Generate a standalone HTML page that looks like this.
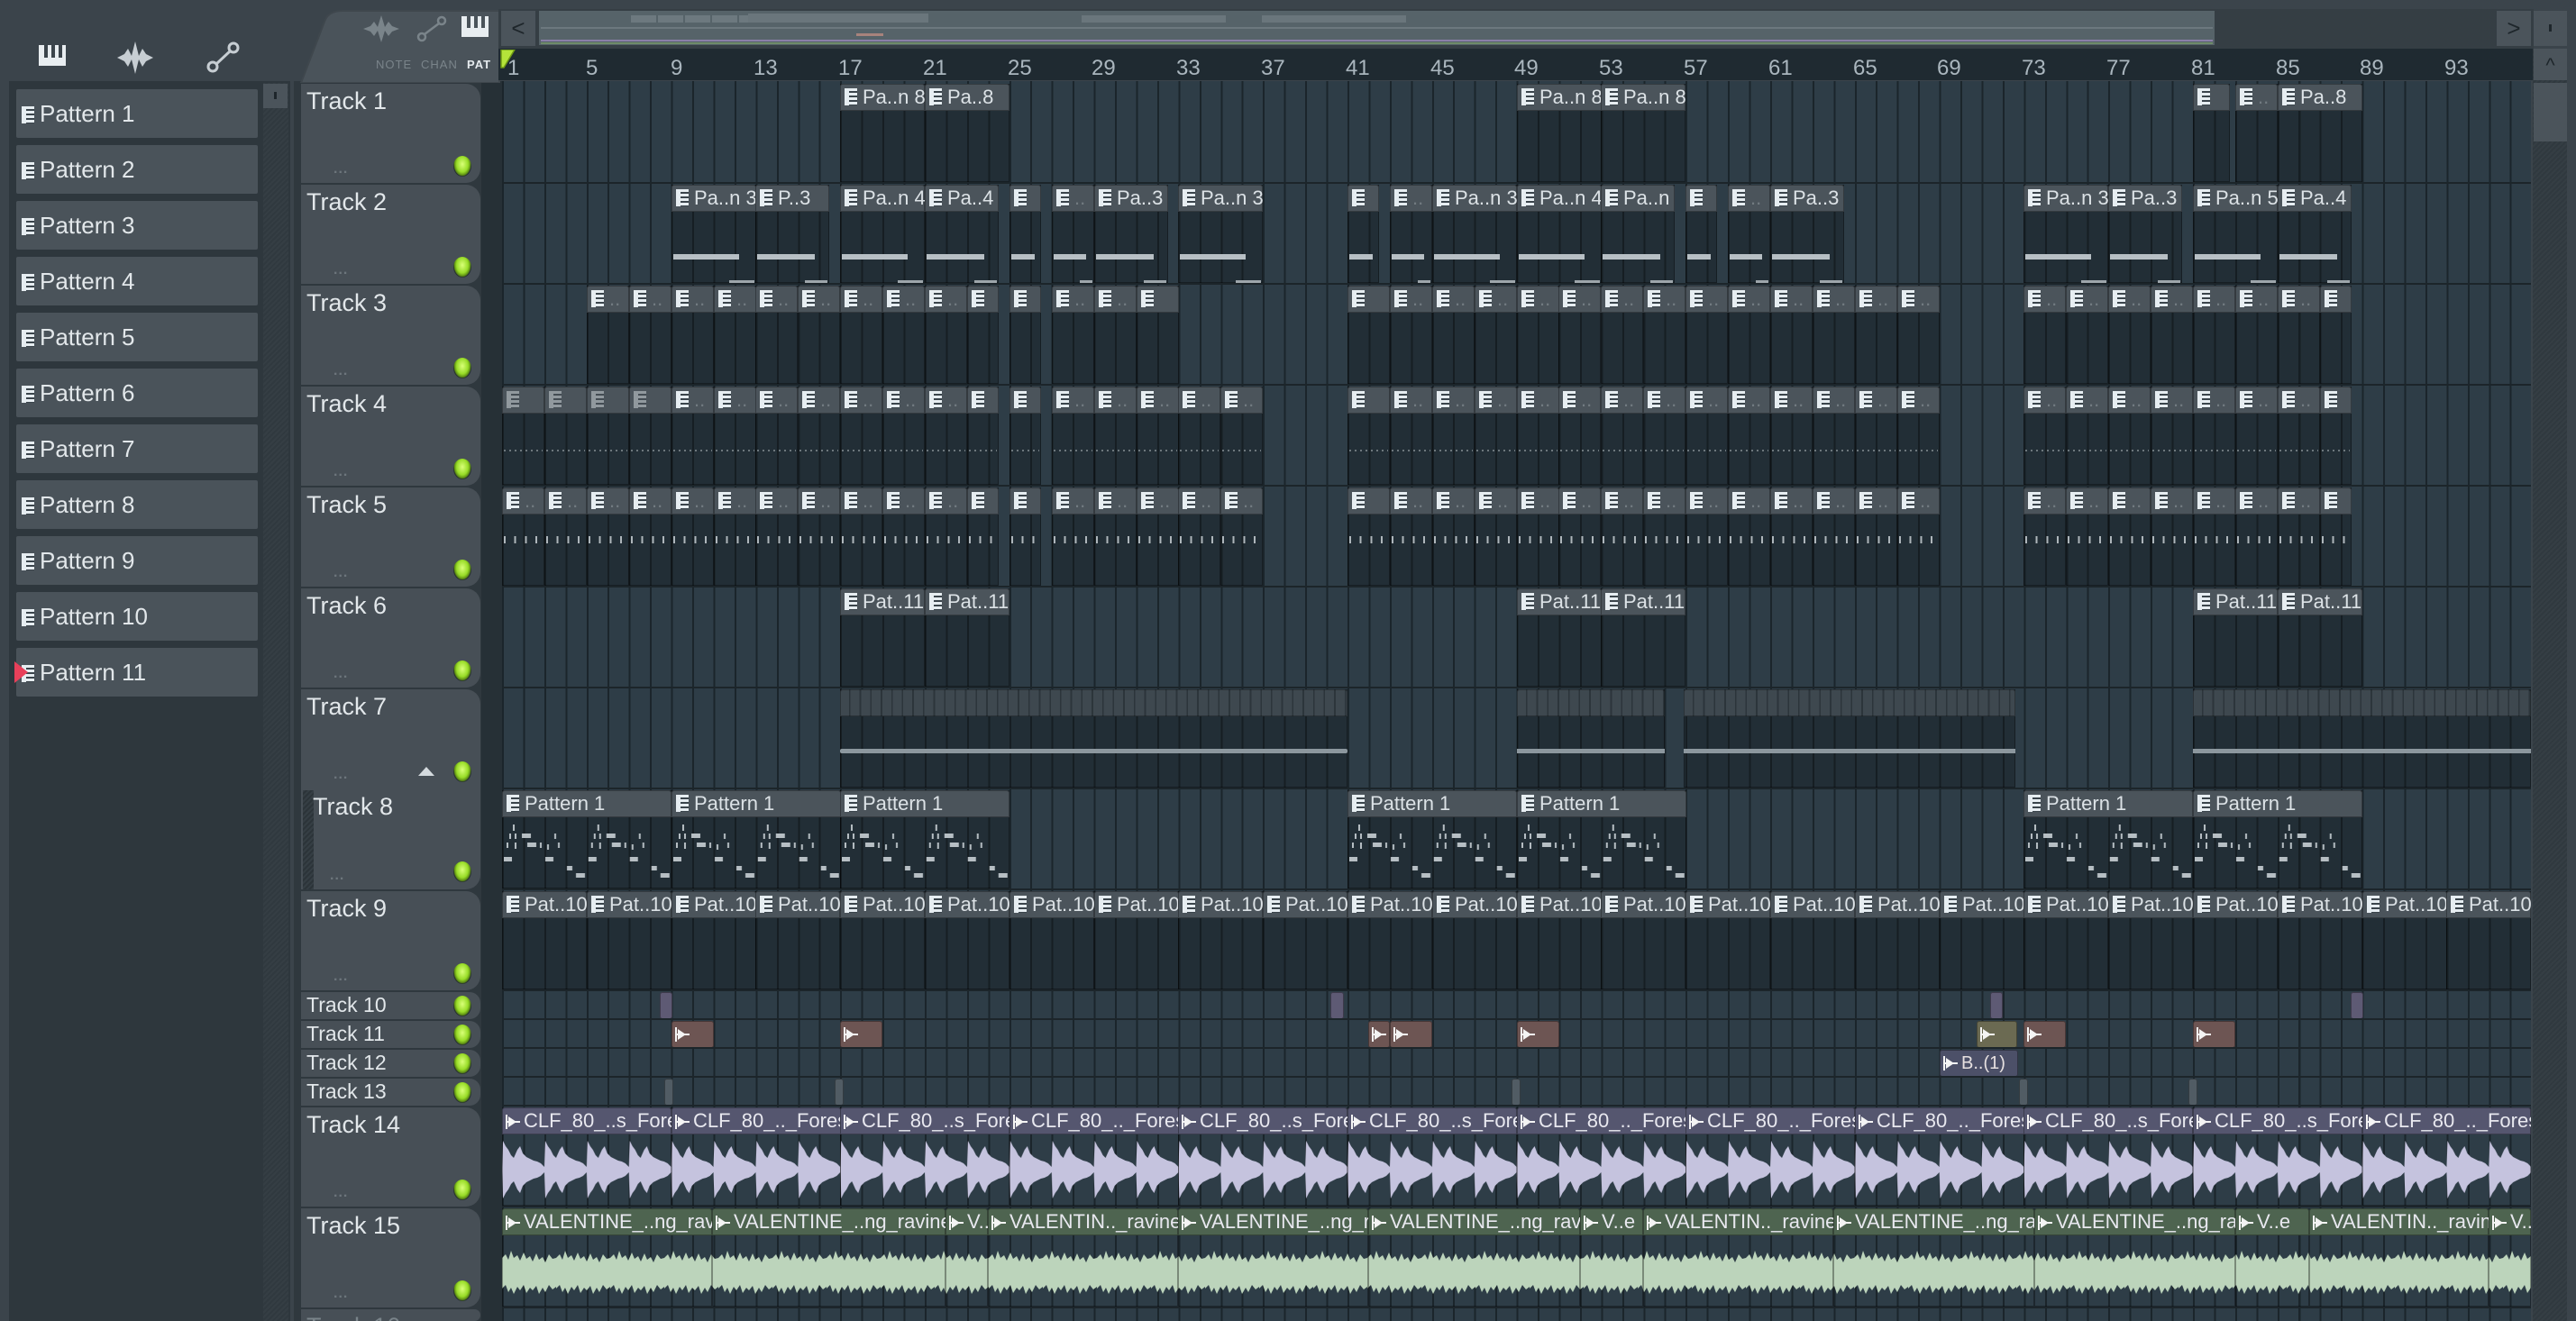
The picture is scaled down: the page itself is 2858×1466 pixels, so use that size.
<!DOCTYPE html>
<html style="width:2858px;height:1466px;overflow:hidden"><head><meta charset="utf-8">
<style>
*{box-sizing:border-box}
html,body{margin:0;width:2858px;height:1466px;overflow:hidden}
body{background:#3b444b;position:relative;font-family:"Liberation Sans","DejaVu Sans",sans-serif}
.a{position:absolute}
.pi{display:inline-block;width:14px;height:19px;vertical-align:-2px;margin-right:6px;background:linear-gradient(90deg,#e6edf1 0 5px,transparent 5px),repeating-linear-gradient(180deg,#e6edf1 0 3px,#3a444b 3px 5px);}
.pit{position:absolute;left:18px;width:268px;height:54px;background:#4a535a;border-radius:2px;color:#e2e7ea;font-size:26px;line-height:54px;padding-left:6px;white-space:nowrap}
.th{position:absolute;left:334px;width:199px;height:110px;background:#474f56;border-radius:0 16px 16px 0;color:#e2e7ea;font-size:27px;padding:4px 0 0 6px;white-space:nowrap}
.th.s{height:30px;font-size:23px;padding-top:1px;border-radius:0 12px 12px 0}
.led{position:absolute;left:169px;width:20px;height:23px;border-radius:50%;background:radial-gradient(ellipse at 50% 40%,#d9ff78 0,#98dc27 45%,#5f8f14 62%,#222b30 70%,#3d464c 80%)}
.dots{position:absolute;left:36px;bottom:6px;color:#6d767c;font-size:16px;letter-spacing:1px;font-weight:bold}
.row{position:absolute;left:557px;width:2251px;height:112px}
.row:after{content:"";position:absolute;left:0;right:0;bottom:0;height:2px;background:#1c252a}
.c{position:absolute;top:1px;height:109px;background:rgba(12,18,22,.33);box-shadow:inset 0 0 0 1px rgba(0,0,0,.35)}
.h{height:30px;background:#4b545b;color:#dce2e6;font-size:22px;line-height:30px;padding-left:5px;white-space:nowrap;overflow:hidden;border-radius:3px 3px 0 0;box-shadow:inset 0 0 0 1px rgba(0,0,0,.3)}
.h i{font-style:normal;color:#727b81}
.d .h .pi{opacity:.45}
.n{position:absolute;top:77px;height:6px;left:2px;right:20%;background:#b7bfc4}
.n2{position:absolute;top:106px;height:5px;right:2px;width:30%;background:#9ea6ab}
.dl{position:absolute;left:2px;right:2px;top:70px;height:2px;background:repeating-linear-gradient(90deg,#6d777d 0 2px,transparent 2px 6px)}
.tk{position:absolute;left:2px;right:2px;top:54px;height:8px;background:repeating-linear-gradient(90deg,#aeb6bb 0 2px,transparent 2px 11.7px)}
.sm{position:absolute;top:1px;height:30px;border-radius:3px;box-shadow:inset 0 0 0 1px rgba(0,0,0,.35);color:#e6e0e0;font-size:20px;line-height:30px;padding-left:4px;white-space:nowrap;overflow:hidden}
.au{display:inline-block;width:16px;height:16px;vertical-align:-2px;margin-right:4px;position:relative;background:linear-gradient(#f4f4f4,#f4f4f4) 0 0/2px 16px no-repeat,linear-gradient(#f4f4f4,#f4f4f4) 0 7px/16px 2px no-repeat}
.au:after{content:"";position:absolute;left:3px;top:2px;border-left:9px solid #f4f4f4;border-top:6px solid transparent;border-bottom:6px solid transparent}
.rl{position:absolute;top:62px;color:#aab6be;font-size:24px}
.wh{height:30px;color:#e8e8ef;font-size:22px;line-height:30px;padding-left:4px;white-space:nowrap;overflow:hidden;border-radius:3px 3px 0 0;box-shadow:inset 0 0 0 1px rgba(0,0,0,.3)}
.nt{position:absolute;left:2px;top:36px}
</style></head><body>
<svg width="0" height="0" style="position:absolute"><defs><pattern id="p8" width="93.8" height="70" patternUnits="userSpaceOnUse"><g fill="#b7bfc4"><rect x="10" y="2" width="2" height="7"/><rect x="6" y="12" width="2" height="6"/><rect x="12" y="12" width="2" height="6"/><rect x="20" y="12" width="10" height="5"/><rect x="3" y="22" width="2" height="6"/><rect x="12" y="22" width="2" height="7"/><rect x="26" y="22" width="10" height="5"/><rect x="40" y="22" width="2" height="6"/><rect x="48" y="24" width="2" height="6"/><rect x="0" y="38" width="9" height="5"/><rect x="46" y="38" width="9" height="5"/><rect x="70" y="48" width="6" height="5"/><rect x="80" y="56" width="10" height="5"/><rect x="56" y="12" width="2" height="6"/><rect x="60" y="22" width="2" height="6"/></g></pattern></defs></svg>

<!-- left panel top icons -->
<div class="a" style="left:43px;top:50px;width:30px;height:23px;background:#e8edf0"></div>
<div class="a" style="left:49px;top:50px;width:4px;height:14px;background:#3b444b"></div>
<div class="a" style="left:57px;top:50px;width:4px;height:14px;background:#3b444b"></div>
<div class="a" style="left:65px;top:50px;width:4px;height:14px;background:#3b444b"></div>
<svg class="a" style="left:130px;top:44px" width="44" height="40"><path d="M0 20 L8 16 L12 10 L16 18 L20 2 L24 18 L28 10 L32 16 L40 20 L32 24 L28 30 L24 22 L20 38 L16 22 L12 30 L8 24 Z" fill="#c7ced3"/></svg>
<svg class="a" style="left:228px;top:44px" width="40" height="40"><circle cx="8" cy="30" r="5" fill="none" stroke="#c7ced3" stroke-width="3"/><circle cx="31" cy="9" r="5" fill="none" stroke="#c7ced3" stroke-width="3"/><line x1="12" y1="27" x2="27" y2="13" stroke="#c7ced3" stroke-width="3"/></svg>

<!-- pattern list -->
<div class="a" style="left:10px;top:90px;width:312px;height:1376px;background:#2e373d"></div>
<div class="a" style="left:292px;top:92px;width:28px;height:1374px;background:repeating-linear-gradient(135deg,#353e44 0 2px,#30393f 2px 4px)"></div>
<div class="a" style="left:292px;top:93px;width:27px;height:27px;background:#4b545b"></div>
<div class="a" style="left:304px;top:102px;width:3px;height:8px;background:#1e262b"></div>
<div class="pit" style="top:99px"><span class="pi"></span>Pattern 1</div>
<div class="pit" style="top:161px"><span class="pi"></span>Pattern 2</div>
<div class="pit" style="top:223px"><span class="pi"></span>Pattern 3</div>
<div class="pit" style="top:285px"><span class="pi"></span>Pattern 4</div>
<div class="pit" style="top:347px"><span class="pi"></span>Pattern 5</div>
<div class="pit" style="top:409px"><span class="pi"></span>Pattern 6</div>
<div class="pit" style="top:471px"><span class="pi"></span>Pattern 7</div>
<div class="pit" style="top:533px"><span class="pi"></span>Pattern 8</div>
<div class="pit" style="top:595px"><span class="pi"></span>Pattern 9</div>
<div class="pit" style="top:657px"><span class="pi"></span>Pattern 10</div>
<div class="pit" style="top:719px"><span class="pi"></span>Pattern 11</div>
<div class="a" style="left:16px;top:734px;border-left:15px solid #e8405a;border-top:12px solid transparent;border-bottom:12px solid transparent"></div>

<!-- header column background -->
<div class="a" style="left:326px;top:90px;width:231px;height:1376px;background:#2f383e"></div>
<div class="a" style="left:534px;top:90px;width:23px;height:1376px;background:#263036"></div>

<!-- tab -->
<svg class="a" style="left:330px;top:10px" width="226" height="82"><path d="M4 82 L30 14 Q34 2 50 2 L224 2 L224 82 Z" fill="#4a535a" stroke="#3f474d" stroke-width="2"/></svg>
<svg class="a" style="left:403px;top:16px" width="42" height="32"><path d="M0 16 L8 13 L12 8 L16 14 L20 1 L24 14 L28 8 L32 13 L40 16 L32 19 L28 24 L24 18 L20 31 L16 18 L12 24 L8 19 Z" fill="#7a848a"/></svg>
<svg class="a" style="left:462px;top:16px" width="34" height="32"><circle cx="6" cy="25" r="4" fill="none" stroke="#7a848a" stroke-width="2.5"/><circle cx="28" cy="7" r="4" fill="none" stroke="#7a848a" stroke-width="2.5"/><line x1="9" y1="22" x2="25" y2="10" stroke="#7a848a" stroke-width="2.5"/></svg>
<div class="a" style="left:512px;top:18px;width:30px;height:23px;background:#e8edf0"></div>
<div class="a" style="left:518px;top:18px;width:4px;height:13px;background:#4a535a"></div>
<div class="a" style="left:526px;top:18px;width:4px;height:13px;background:#4a535a"></div>
<div class="a" style="left:534px;top:18px;width:4px;height:13px;background:#4a535a"></div>
<div class="a" style="left:417px;top:64px;font-size:13px;color:#7a848a;letter-spacing:1px">NOTE</div>
<div class="a" style="left:467px;top:64px;font-size:13px;color:#7a848a;letter-spacing:1px">CHAN</div>
<div class="a" style="left:518px;top:64px;font-size:13px;color:#e6ebee;font-weight:bold;letter-spacing:1px">PAT</div>

<!-- overview bar -->
<div class="a" style="left:553px;top:10px;width:2258px;height:44px;background:#353e44"></div>
<div class="a" style="left:556px;top:12px;width:38px;height:39px;background:#4b545b;color:#1e262b;font-size:26px;text-align:center;line-height:38px">&lt;</div>
<div class="a" style="left:598px;top:12px;width:1859px;height:38px;background:#566369"></div>
<div class="a" style="left:600px;top:30px;width:1855px;height:2px;background:#6c787e"></div>
<div class="a" style="left:600px;top:44px;width:1855px;height:2px;background:#8a7fa8"></div>
<div class="a" style="left:600px;top:47px;width:1855px;height:2px;background:#6f8c6a"></div>
<div class="a" style="left:700px;top:17px;width:220px;height:8px;background:repeating-linear-gradient(90deg,#6d797f 0 28px,transparent 28px 30px)"></div>
<div class="a" style="left:830px;top:15px;width:200px;height:10px;background:#6a767c"></div>
<div class="a" style="left:950px;top:37px;width:30px;height:3px;background:#a8837c"></div>
<div class="a" style="left:1200px;top:17px;width:160px;height:8px;background:#6a767c"></div>
<div class="a" style="left:1400px;top:17px;width:160px;height:8px;background:#6a767c"></div>
<div class="a" style="left:2770px;top:12px;width:38px;height:39px;background:#4b545b;color:#1e262b;font-size:26px;text-align:center;line-height:38px">&gt;</div>
<div class="a" style="left:2811px;top:12px;width:37px;height:39px;background:#4b545b"></div>
<div class="a" style="left:2828px;top:27px;width:3px;height:8px;background:#1e262b"></div>

<!-- right scrollbar -->
<div class="a" style="left:2810px;top:54px;width:38px;height:1412px;background:repeating-linear-gradient(135deg,#353e44 0 2px,#30393f 2px 4px)"></div>
<div class="a" style="left:2811px;top:54px;width:37px;height:35px;background:#4b545b;color:#1e262b;font-size:22px;text-align:center;line-height:38px">^</div>
<div class="a" style="left:2811px;top:92px;width:37px;height:65px;background:#4b545b"></div>

<!-- ruler -->
<div class="a" style="left:553px;top:54px;width:2257px;height:35px;background:#1f2a31"></div>
<div class="rl" style="left:563px">1</div>
<div class="rl" style="left:650px">5</div>
<div class="rl" style="left:744px">9</div>
<div class="rl" style="left:836px">13</div>
<div class="rl" style="left:930px">17</div>
<div class="rl" style="left:1024px">21</div>
<div class="rl" style="left:1118px">25</div>
<div class="rl" style="left:1211px">29</div>
<div class="rl" style="left:1305px">33</div>
<div class="rl" style="left:1399px">37</div>
<div class="rl" style="left:1493px">41</div>
<div class="rl" style="left:1587px">45</div>
<div class="rl" style="left:1680px">49</div>
<div class="rl" style="left:1774px">53</div>
<div class="rl" style="left:1868px">57</div>
<div class="rl" style="left:1962px">61</div>
<div class="rl" style="left:2056px">65</div>
<div class="rl" style="left:2149px">69</div>
<div class="rl" style="left:2243px">73</div>
<div class="rl" style="left:2337px">77</div>
<div class="rl" style="left:2431px">81</div>
<div class="rl" style="left:2525px">85</div>
<div class="rl" style="left:2618px">89</div>
<div class="rl" style="left:2712px">93</div>
<svg class="a" style="left:555px;top:55px" width="20" height="22"><path d="M1 0 L16 0 L4 20 L1 20 Z" fill="#b5e43a" stroke="#6f9a14" stroke-width="1.5"/></svg>

<!-- grid -->
<div class="a" style="left:557px;top:90px;width:2251px;height:1376px;background:repeating-linear-gradient(90deg,#1b252b 0 2px,transparent 2px 23.45px),#2e3d47"></div>

<!-- track headers -->
<div class="th" style="top:93px">Track 1<div class="dots">...</div><div class="led" style="top:80px"></div></div>
<div class="th" style="top:205px">Track 2<div class="dots">...</div><div class="led" style="top:80px"></div></div>
<div class="th" style="top:317px">Track 3<div class="dots">...</div><div class="led" style="top:80px"></div></div>
<div class="th" style="top:429px">Track 4<div class="dots">...</div><div class="led" style="top:80px"></div></div>
<div class="th" style="top:541px">Track 5<div class="dots">...</div><div class="led" style="top:80px"></div></div>
<div class="th" style="top:653px">Track 6<div class="dots">...</div><div class="led" style="top:80px"></div></div>
<div class="th" style="top:765px;height:222px">Track 7<div class="dots" style="bottom:118px">...</div><div class="led" style="top:80px"></div>
<div class="a" style="left:130px;top:86px;border-bottom:10px solid #d4dade;border-left:9px solid transparent;border-right:9px solid transparent"></div></div>
<div class="a" style="left:336px;top:877px;width:12px;height:110px;background:repeating-linear-gradient(135deg,#353e44 0 2px,#2c3439 2px 4px)"></div>
<div class="a" style="left:347px;top:880px;font-size:27px;color:#e2e7ea">Track 8</div>
<div class="a" style="left:366px;top:963px;color:#6d767c;font-size:16px;font-weight:bold;letter-spacing:1px">...</div>
<div class="led a" style="left:503px;top:956px"></div>
<div class="th" style="top:989px">Track 9<div class="dots">...</div><div class="led" style="top:80px"></div></div>
<div class="th s" style="top:1101px">Track 10<div class="led" style="top:4px"></div></div>
<div class="th s" style="top:1133px">Track 11<div class="led" style="top:4px"></div></div>
<div class="th s" style="top:1165px">Track 12<div class="led" style="top:4px"></div></div>
<div class="th s" style="top:1197px">Track 13<div class="led" style="top:4px"></div></div>
<div class="th" style="top:1229px">Track 14<div class="dots">...</div><div class="led" style="top:80px"></div></div>
<div class="th" style="top:1341px">Track 15<div class="dots">...</div><div class="led" style="top:80px"></div></div>
<div class="th" style="top:1453px;height:13px;color:#7a848a;overflow:hidden">Track 16</div>

<!-- Track 1 -->
<div class="row" style="top:92px">
<div class="c" style="left:375px;width:94px"><div class="h"><span class="pi"></span>Pa..n 8</div></div>
<div class="c" style="left:469px;width:94px"><div class="h"><span class="pi"></span>Pa..8</div></div>
<div class="c" style="left:1126px;width:94px"><div class="h"><span class="pi"></span>Pa..n 8</div></div>
<div class="c" style="left:1219px;width:94px"><div class="h"><span class="pi"></span>Pa..n 8</div></div>
<div class="c" style="left:1876px;width:41px"><div class="h"><span class="pi"></span></div></div>
<div class="c" style="left:1923px;width:47px"><div class="h"><span class="pi"></span><i>..</i></div></div>
<div class="c" style="left:1970px;width:94px"><div class="h"><span class="pi"></span>Pa..8</div></div>
</div>

<!-- Track 2 -->
<div class="row" style="top:204px">
<div class="c" style="left:188px;width:94px"><div class="h"><span class="pi"></span>Pa..n 3</div><div class="n"></div><div class="n2"></div></div>
<div class="c" style="left:281px;width:82px"><div class="h"><span class="pi"></span>P..3</div><div class="n"></div><div class="n2"></div></div>
<div class="c" style="left:375px;width:94px"><div class="h"><span class="pi"></span>Pa..n 4</div><div class="n"></div><div class="n2"></div></div>
<div class="c" style="left:469px;width:82px"><div class="h"><span class="pi"></span>Pa..4</div><div class="n"></div><div class="n2"></div></div>
<div class="c" style="left:563px;width:35px"><div class="h"><span class="pi"></span></div><div class="n"></div></div>
<div class="c" style="left:610px;width:47px"><div class="h"><span class="pi"></span><i>..</i></div><div class="n"></div><div class="n2"></div></div>
<div class="c" style="left:657px;width:82px"><div class="h"><span class="pi"></span>Pa..3</div><div class="n"></div><div class="n2"></div></div>
<div class="c" style="left:750px;width:94px"><div class="h"><span class="pi"></span>Pa..n 3</div><div class="n"></div><div class="n2"></div></div>
<div class="c" style="left:938px;width:35px"><div class="h"><span class="pi"></span></div><div class="n"></div></div>
<div class="c" style="left:985px;width:47px"><div class="h"><span class="pi"></span><i>..</i></div><div class="n"></div><div class="n2"></div></div>
<div class="c" style="left:1032px;width:94px"><div class="h"><span class="pi"></span>Pa..n 3</div><div class="n"></div><div class="n2"></div></div>
<div class="c" style="left:1126px;width:94px"><div class="h"><span class="pi"></span>Pa..n 4</div><div class="n"></div><div class="n2"></div></div>
<div class="c" style="left:1219px;width:82px"><div class="h"><span class="pi"></span>Pa..n 4</div><div class="n"></div><div class="n2"></div></div>
<div class="c" style="left:1313px;width:35px"><div class="h"><span class="pi"></span></div><div class="n"></div></div>
<div class="c" style="left:1360px;width:47px"><div class="h"><span class="pi"></span><i>..</i></div><div class="n"></div><div class="n2"></div></div>
<div class="c" style="left:1407px;width:82px"><div class="h"><span class="pi"></span>Pa..3</div><div class="n"></div><div class="n2"></div></div>
<div class="c" style="left:1688px;width:94px"><div class="h"><span class="pi"></span>Pa..n 3</div><div class="n"></div><div class="n2"></div></div>
<div class="c" style="left:1782px;width:82px"><div class="h"><span class="pi"></span>Pa..3</div><div class="n"></div><div class="n2"></div></div>
<div class="c" style="left:1876px;width:94px"><div class="h"><span class="pi"></span>Pa..n 5</div><div class="n"></div><div class="n2"></div></div>
<div class="c" style="left:1970px;width:82px"><div class="h"><span class="pi"></span>Pa..4</div><div class="n"></div><div class="n2"></div></div>
</div>

<!-- Track 3 -->
<div class="row" style="top:316px">
<div class="c" style="left:94px;width:47px"><div class="h"><span class="pi"></span><i>..</i></div></div>
<div class="c" style="left:141px;width:47px"><div class="h"><span class="pi"></span><i>..</i></div></div>
<div class="c" style="left:188px;width:47px"><div class="h"><span class="pi"></span><i>..</i></div></div>
<div class="c" style="left:235px;width:47px"><div class="h"><span class="pi"></span><i>..</i></div></div>
<div class="c" style="left:281px;width:47px"><div class="h"><span class="pi"></span><i>..</i></div></div>
<div class="c" style="left:328px;width:47px"><div class="h"><span class="pi"></span><i>..</i></div></div>
<div class="c" style="left:375px;width:47px"><div class="h"><span class="pi"></span><i>..</i></div></div>
<div class="c" style="left:422px;width:47px"><div class="h"><span class="pi"></span><i>..</i></div></div>
<div class="c" style="left:469px;width:47px"><div class="h"><span class="pi"></span><i>..</i></div></div>
<div class="c" style="left:516px;width:35px"><div class="h"><span class="pi"></span></div></div>
<div class="c" style="left:563px;width:35px"><div class="h"><span class="pi"></span></div></div>
<div class="c" style="left:610px;width:47px"><div class="h"><span class="pi"></span><i>..</i></div></div>
<div class="c" style="left:657px;width:47px"><div class="h"><span class="pi"></span><i>..</i></div></div>
<div class="c" style="left:704px;width:47px"><div class="h"><span class="pi"></span></div></div>
<div class="c" style="left:938px;width:47px"><div class="h"><span class="pi"></span></div></div>
<div class="c" style="left:985px;width:47px"><div class="h"><span class="pi"></span><i>..</i></div></div>
<div class="c" style="left:1032px;width:47px"><div class="h"><span class="pi"></span><i>..</i></div></div>
<div class="c" style="left:1079px;width:47px"><div class="h"><span class="pi"></span><i>..</i></div></div>
<div class="c" style="left:1126px;width:47px"><div class="h"><span class="pi"></span><i>..</i></div></div>
<div class="c" style="left:1172px;width:47px"><div class="h"><span class="pi"></span><i>..</i></div></div>
<div class="c" style="left:1219px;width:47px"><div class="h"><span class="pi"></span><i>..</i></div></div>
<div class="c" style="left:1266px;width:47px"><div class="h"><span class="pi"></span><i>..</i></div></div>
<div class="c" style="left:1313px;width:47px"><div class="h"><span class="pi"></span><i>..</i></div></div>
<div class="c" style="left:1360px;width:47px"><div class="h"><span class="pi"></span><i>..</i></div></div>
<div class="c" style="left:1407px;width:47px"><div class="h"><span class="pi"></span><i>..</i></div></div>
<div class="c" style="left:1454px;width:47px"><div class="h"><span class="pi"></span><i>..</i></div></div>
<div class="c" style="left:1501px;width:47px"><div class="h"><span class="pi"></span><i>..</i></div></div>
<div class="c" style="left:1548px;width:47px"><div class="h"><span class="pi"></span><i>..</i></div></div>
<div class="c" style="left:1688px;width:47px"><div class="h"><span class="pi"></span><i>..</i></div></div>
<div class="c" style="left:1735px;width:47px"><div class="h"><span class="pi"></span><i>..</i></div></div>
<div class="c" style="left:1782px;width:47px"><div class="h"><span class="pi"></span><i>..</i></div></div>
<div class="c" style="left:1829px;width:47px"><div class="h"><span class="pi"></span><i>..</i></div></div>
<div class="c" style="left:1876px;width:47px"><div class="h"><span class="pi"></span><i>..</i></div></div>
<div class="c" style="left:1923px;width:47px"><div class="h"><span class="pi"></span><i>..</i></div></div>
<div class="c" style="left:1970px;width:47px"><div class="h"><span class="pi"></span><i>..</i></div></div>
<div class="c" style="left:2017px;width:35px"><div class="h"><span class="pi"></span></div></div>
</div>

<!-- Track 4 -->
<div class="row" style="top:428px">
<div class="c d" style="left:0;width:47px"><div class="h"><span class="pi"></span></div><div class="dl"></div></div>
<div class="c d" style="left:47px;width:47px"><div class="h"><span class="pi"></span></div><div class="dl"></div></div>
<div class="c d" style="left:94px;width:47px"><div class="h"><span class="pi"></span></div><div class="dl"></div></div>
<div class="c d" style="left:141px;width:47px"><div class="h"><span class="pi"></span></div><div class="dl"></div></div>
<div class="c" style="left:188px;width:47px"><div class="h"><span class="pi"></span><i>..</i></div><div class="dl"></div></div>
<div class="c" style="left:235px;width:47px"><div class="h"><span class="pi"></span><i>..</i></div><div class="dl"></div></div>
<div class="c" style="left:281px;width:47px"><div class="h"><span class="pi"></span><i>..</i></div><div class="dl"></div></div>
<div class="c" style="left:328px;width:47px"><div class="h"><span class="pi"></span><i>..</i></div><div class="dl"></div></div>
<div class="c" style="left:375px;width:47px"><div class="h"><span class="pi"></span><i>..</i></div><div class="dl"></div></div>
<div class="c" style="left:422px;width:47px"><div class="h"><span class="pi"></span><i>..</i></div><div class="dl"></div></div>
<div class="c" style="left:469px;width:47px"><div class="h"><span class="pi"></span><i>..</i></div><div class="dl"></div></div>
<div class="c" style="left:516px;width:35px"><div class="h"><span class="pi"></span></div><div class="dl"></div></div>
<div class="c" style="left:563px;width:35px"><div class="h"><span class="pi"></span></div><div class="dl"></div></div>
<div class="c" style="left:610px;width:47px"><div class="h"><span class="pi"></span><i>..</i></div><div class="dl"></div></div>
<div class="c" style="left:657px;width:47px"><div class="h"><span class="pi"></span><i>..</i></div><div class="dl"></div></div>
<div class="c" style="left:704px;width:47px"><div class="h"><span class="pi"></span><i>..</i></div><div class="dl"></div></div>
<div class="c" style="left:750px;width:47px"><div class="h"><span class="pi"></span><i>..</i></div><div class="dl"></div></div>
<div class="c" style="left:797px;width:47px"><div class="h"><span class="pi"></span><i>..</i></div><div class="dl"></div></div>
<div class="c" style="left:938px;width:47px"><div class="h"><span class="pi"></span></div><div class="dl"></div></div>
<div class="c" style="left:985px;width:47px"><div class="h"><span class="pi"></span><i>..</i></div><div class="dl"></div></div>
<div class="c" style="left:1032px;width:47px"><div class="h"><span class="pi"></span><i>..</i></div><div class="dl"></div></div>
<div class="c" style="left:1079px;width:47px"><div class="h"><span class="pi"></span><i>..</i></div><div class="dl"></div></div>
<div class="c" style="left:1126px;width:47px"><div class="h"><span class="pi"></span><i>..</i></div><div class="dl"></div></div>
<div class="c" style="left:1172px;width:47px"><div class="h"><span class="pi"></span><i>..</i></div><div class="dl"></div></div>
<div class="c" style="left:1219px;width:47px"><div class="h"><span class="pi"></span><i>..</i></div><div class="dl"></div></div>
<div class="c" style="left:1266px;width:47px"><div class="h"><span class="pi"></span><i>..</i></div><div class="dl"></div></div>
<div class="c" style="left:1313px;width:47px"><div class="h"><span class="pi"></span><i>..</i></div><div class="dl"></div></div>
<div class="c" style="left:1360px;width:47px"><div class="h"><span class="pi"></span><i>..</i></div><div class="dl"></div></div>
<div class="c" style="left:1407px;width:47px"><div class="h"><span class="pi"></span><i>..</i></div><div class="dl"></div></div>
<div class="c" style="left:1454px;width:47px"><div class="h"><span class="pi"></span><i>..</i></div><div class="dl"></div></div>
<div class="c" style="left:1501px;width:47px"><div class="h"><span class="pi"></span><i>..</i></div><div class="dl"></div></div>
<div class="c" style="left:1548px;width:47px"><div class="h"><span class="pi"></span><i>..</i></div><div class="dl"></div></div>
<div class="c" style="left:1688px;width:47px"><div class="h"><span class="pi"></span><i>..</i></div><div class="dl"></div></div>
<div class="c" style="left:1735px;width:47px"><div class="h"><span class="pi"></span><i>..</i></div><div class="dl"></div></div>
<div class="c" style="left:1782px;width:47px"><div class="h"><span class="pi"></span><i>..</i></div><div class="dl"></div></div>
<div class="c" style="left:1829px;width:47px"><div class="h"><span class="pi"></span><i>..</i></div><div class="dl"></div></div>
<div class="c" style="left:1876px;width:47px"><div class="h"><span class="pi"></span><i>..</i></div><div class="dl"></div></div>
<div class="c" style="left:1923px;width:47px"><div class="h"><span class="pi"></span><i>..</i></div><div class="dl"></div></div>
<div class="c" style="left:1970px;width:47px"><div class="h"><span class="pi"></span><i>..</i></div><div class="dl"></div></div>
<div class="c" style="left:2017px;width:35px"><div class="h"><span class="pi"></span></div><div class="dl"></div></div>
</div>

<!-- Track 5 -->
<div class="row" style="top:540px">
<div class="c" style="left:0;width:47px"><div class="h"><span class="pi"></span><i>..</i></div><div class="tk"></div></div>
<div class="c" style="left:47px;width:47px"><div class="h"><span class="pi"></span><i>..</i></div><div class="tk"></div></div>
<div class="c" style="left:94px;width:47px"><div class="h"><span class="pi"></span><i>..</i></div><div class="tk"></div></div>
<div class="c" style="left:141px;width:47px"><div class="h"><span class="pi"></span><i>..</i></div><div class="tk"></div></div>
<div class="c" style="left:188px;width:47px"><div class="h"><span class="pi"></span><i>..</i></div><div class="tk"></div></div>
<div class="c" style="left:235px;width:47px"><div class="h"><span class="pi"></span><i>..</i></div><div class="tk"></div></div>
<div class="c" style="left:281px;width:47px"><div class="h"><span class="pi"></span><i>..</i></div><div class="tk"></div></div>
<div class="c" style="left:328px;width:47px"><div class="h"><span class="pi"></span><i>..</i></div><div class="tk"></div></div>
<div class="c" style="left:375px;width:47px"><div class="h"><span class="pi"></span><i>..</i></div><div class="tk"></div></div>
<div class="c" style="left:422px;width:47px"><div class="h"><span class="pi"></span><i>..</i></div><div class="tk"></div></div>
<div class="c" style="left:469px;width:47px"><div class="h"><span class="pi"></span><i>..</i></div><div class="tk"></div></div>
<div class="c" style="left:516px;width:35px"><div class="h"><span class="pi"></span></div><div class="tk"></div></div>
<div class="c" style="left:563px;width:35px"><div class="h"><span class="pi"></span></div><div class="tk"></div></div>
<div class="c" style="left:610px;width:47px"><div class="h"><span class="pi"></span><i>..</i></div><div class="tk"></div></div>
<div class="c" style="left:657px;width:47px"><div class="h"><span class="pi"></span><i>..</i></div><div class="tk"></div></div>
<div class="c" style="left:704px;width:47px"><div class="h"><span class="pi"></span><i>..</i></div><div class="tk"></div></div>
<div class="c" style="left:750px;width:47px"><div class="h"><span class="pi"></span><i>..</i></div><div class="tk"></div></div>
<div class="c" style="left:797px;width:47px"><div class="h"><span class="pi"></span><i>..</i></div><div class="tk"></div></div>
<div class="c" style="left:938px;width:47px"><div class="h"><span class="pi"></span></div><div class="tk"></div></div>
<div class="c" style="left:985px;width:47px"><div class="h"><span class="pi"></span><i>..</i></div><div class="tk"></div></div>
<div class="c" style="left:1032px;width:47px"><div class="h"><span class="pi"></span><i>..</i></div><div class="tk"></div></div>
<div class="c" style="left:1079px;width:47px"><div class="h"><span class="pi"></span><i>..</i></div><div class="tk"></div></div>
<div class="c" style="left:1126px;width:47px"><div class="h"><span class="pi"></span><i>..</i></div><div class="tk"></div></div>
<div class="c" style="left:1172px;width:47px"><div class="h"><span class="pi"></span><i>..</i></div><div class="tk"></div></div>
<div class="c" style="left:1219px;width:47px"><div class="h"><span class="pi"></span><i>..</i></div><div class="tk"></div></div>
<div class="c" style="left:1266px;width:47px"><div class="h"><span class="pi"></span><i>..</i></div><div class="tk"></div></div>
<div class="c" style="left:1313px;width:47px"><div class="h"><span class="pi"></span><i>..</i></div><div class="tk"></div></div>
<div class="c" style="left:1360px;width:47px"><div class="h"><span class="pi"></span><i>..</i></div><div class="tk"></div></div>
<div class="c" style="left:1407px;width:47px"><div class="h"><span class="pi"></span><i>..</i></div><div class="tk"></div></div>
<div class="c" style="left:1454px;width:47px"><div class="h"><span class="pi"></span><i>..</i></div><div class="tk"></div></div>
<div class="c" style="left:1501px;width:47px"><div class="h"><span class="pi"></span><i>..</i></div><div class="tk"></div></div>
<div class="c" style="left:1548px;width:47px"><div class="h"><span class="pi"></span><i>..</i></div><div class="tk"></div></div>
<div class="c" style="left:1688px;width:47px"><div class="h"><span class="pi"></span><i>..</i></div><div class="tk"></div></div>
<div class="c" style="left:1735px;width:47px"><div class="h"><span class="pi"></span><i>..</i></div><div class="tk"></div></div>
<div class="c" style="left:1782px;width:47px"><div class="h"><span class="pi"></span><i>..</i></div><div class="tk"></div></div>
<div class="c" style="left:1829px;width:47px"><div class="h"><span class="pi"></span><i>..</i></div><div class="tk"></div></div>
<div class="c" style="left:1876px;width:47px"><div class="h"><span class="pi"></span><i>..</i></div><div class="tk"></div></div>
<div class="c" style="left:1923px;width:47px"><div class="h"><span class="pi"></span><i>..</i></div><div class="tk"></div></div>
<div class="c" style="left:1970px;width:47px"><div class="h"><span class="pi"></span><i>..</i></div><div class="tk"></div></div>
<div class="c" style="left:2017px;width:35px"><div class="h"><span class="pi"></span></div><div class="tk"></div></div>
</div>

<!-- Track 6 -->
<div class="row" style="top:652px">
<div class="c" style="left:375px;width:94px"><div class="h"><span class="pi"></span>Pat..11</div></div>
<div class="c" style="left:469px;width:94px"><div class="h"><span class="pi"></span>Pat..11</div></div>
<div class="c" style="left:1126px;width:94px"><div class="h"><span class="pi"></span>Pat..11</div></div>
<div class="c" style="left:1219px;width:94px"><div class="h"><span class="pi"></span>Pat..11</div></div>
<div class="c" style="left:1876px;width:94px"><div class="h"><span class="pi"></span>Pat..11</div></div>
<div class="c" style="left:1970px;width:94px"><div class="h"><span class="pi"></span>Pat..11</div></div>
</div>

<!-- Track 7 -->
<div class="row" style="top:764px">
<div class="c" style="left:375px;width:563px"><div class="h" style="background:repeating-linear-gradient(90deg,#3e484f 0 10px,#2c353b 10px 11.7px)"></div><div class="a" style="left:0;right:0;top:66px;height:5px;background:#8c979e;border-radius:2px"></div></div>
<div class="c" style="left:1126px;width:164px"><div class="h" style="background:repeating-linear-gradient(90deg,#3e484f 0 10px,#2c353b 10px 11.7px)"></div><div class="a" style="left:0;right:0;top:66px;height:5px;background:#8c979e"></div></div>
<div class="c" style="left:1311px;width:368px"><div class="h" style="background:repeating-linear-gradient(90deg,#3e484f 0 10px,#2c353b 10px 11.7px)"></div><div class="a" style="left:0;right:0;top:66px;height:5px;background:#8c979e"></div></div>
<div class="c" style="left:1876px;width:375px"><div class="h" style="background:repeating-linear-gradient(90deg,#3e484f 0 10px,#2c353b 10px 11.7px)"></div><div class="a" style="left:0;right:0;top:66px;height:5px;background:#8c979e"></div></div>
</div>

<!-- Track 8 -->
<div class="row" style="top:876px">
<div class="c" style="left:0;width:188px"><div class="h"><span class="pi"></span>Pattern 1</div><svg class="nt" width="184" height="70"><rect width="184" height="70" fill="url(#p8)"/></svg></div>
<div class="c" style="left:188px;width:188px"><div class="h"><span class="pi"></span>Pattern 1</div><svg class="nt" width="184" height="70"><rect width="184" height="70" fill="url(#p8)"/></svg></div>
<div class="c" style="left:375px;width:188px"><div class="h"><span class="pi"></span>Pattern 1</div><svg class="nt" width="184" height="70"><rect width="184" height="70" fill="url(#p8)"/></svg></div>
<div class="c" style="left:938px;width:188px"><div class="h"><span class="pi"></span>Pattern 1</div><svg class="nt" width="184" height="70"><rect width="184" height="70" fill="url(#p8)"/></svg></div>
<div class="c" style="left:1126px;width:188px"><div class="h"><span class="pi"></span>Pattern 1</div><svg class="nt" width="184" height="70"><rect width="184" height="70" fill="url(#p8)"/></svg></div>
<div class="c" style="left:1688px;width:188px"><div class="h"><span class="pi"></span>Pattern 1</div><svg class="nt" width="184" height="70"><rect width="184" height="70" fill="url(#p8)"/></svg></div>
<div class="c" style="left:1876px;width:188px"><div class="h"><span class="pi"></span>Pattern 1</div><svg class="nt" width="184" height="70"><rect width="184" height="70" fill="url(#p8)"/></svg></div>
</div>

<!-- Track 9 -->
<div class="row" style="top:988px">
<div class="c" style="left:0;width:94px"><div class="h"><span class="pi"></span>Pat..10</div></div>
<div class="c" style="left:94px;width:94px"><div class="h"><span class="pi"></span>Pat..10</div></div>
<div class="c" style="left:188px;width:94px"><div class="h"><span class="pi"></span>Pat..10</div></div>
<div class="c" style="left:281px;width:94px"><div class="h"><span class="pi"></span>Pat..10</div></div>
<div class="c" style="left:375px;width:94px"><div class="h"><span class="pi"></span>Pat..10</div></div>
<div class="c" style="left:469px;width:94px"><div class="h"><span class="pi"></span>Pat..10</div></div>
<div class="c" style="left:563px;width:94px"><div class="h"><span class="pi"></span>Pat..10</div></div>
<div class="c" style="left:657px;width:94px"><div class="h"><span class="pi"></span>Pat..10</div></div>
<div class="c" style="left:750px;width:94px"><div class="h"><span class="pi"></span>Pat..10</div></div>
<div class="c" style="left:844px;width:94px"><div class="h"><span class="pi"></span>Pat..10</div></div>
<div class="c" style="left:938px;width:94px"><div class="h"><span class="pi"></span>Pat..10</div></div>
<div class="c" style="left:1032px;width:94px"><div class="h"><span class="pi"></span>Pat..10</div></div>
<div class="c" style="left:1126px;width:94px"><div class="h"><span class="pi"></span>Pat..10</div></div>
<div class="c" style="left:1219px;width:94px"><div class="h"><span class="pi"></span>Pat..10</div></div>
<div class="c" style="left:1313px;width:94px"><div class="h"><span class="pi"></span>Pat..10</div></div>
<div class="c" style="left:1407px;width:94px"><div class="h"><span class="pi"></span>Pat..10</div></div>
<div class="c" style="left:1501px;width:94px"><div class="h"><span class="pi"></span>Pat..10</div></div>
<div class="c" style="left:1595px;width:94px"><div class="h"><span class="pi"></span>Pat..10</div></div>
<div class="c" style="left:1688px;width:94px"><div class="h"><span class="pi"></span>Pat..10</div></div>
<div class="c" style="left:1782px;width:94px"><div class="h"><span class="pi"></span>Pat..10</div></div>
<div class="c" style="left:1876px;width:94px"><div class="h"><span class="pi"></span>Pat..10</div></div>
<div class="c" style="left:1970px;width:94px"><div class="h"><span class="pi"></span>Pat..10</div></div>
<div class="c" style="left:2064px;width:94px"><div class="h"><span class="pi"></span>Pat..10</div></div>
<div class="c" style="left:2157px;width:94px"><div class="h"><span class="pi"></span>Pat..10</div></div>
</div>

<!-- Tracks 10-13 -->
<div class="row" style="top:1100px;height:32px">
<div class="sm" style="left:175px;width:14px;background:#5e5a74"></div>
<div class="sm" style="left:919px;width:15px;background:#5e5a74"></div>
<div class="sm" style="left:1651px;width:14px;background:#5e5a74"></div>
<div class="sm" style="left:2051px;width:14px;background:#5e5a74"></div>
</div>
<div class="row" style="top:1132px;height:32px">
<div class="sm" style="left:188px;width:47px;background:#6d5553"><span class="au"></span></div>
<div class="sm" style="left:375px;width:47px;background:#6d5553"><span class="au"></span></div>
<div class="sm" style="left:961px;width:24px;background:#6d5553"><span class="au"></span></div>
<div class="sm" style="left:985px;width:47px;background:#6d5553"><span class="au"></span></div>
<div class="sm" style="left:1126px;width:47px;background:#6d5553"><span class="au"></span></div>
<div class="sm" style="left:1636px;width:45px;background:#6b6a52"><span class="au"></span></div>
<div class="sm" style="left:1688px;width:47px;background:#6d5553"><span class="au"></span></div>
<div class="sm" style="left:1876px;width:47px;background:#6d5553"><span class="au"></span></div>
</div>
<div class="row" style="top:1164px;height:32px">
<div class="sm" style="left:1595px;width:87px;background:#4c5068"><span class="au"></span>B..(1)</div>
</div>
<div class="row" style="top:1196px;height:32px">
<div class="sm" style="left:180px;width:10px;background:#515c64"></div>
<div class="sm" style="left:369px;width:10px;background:#515c64"></div>
<div class="sm" style="left:1120px;width:10px;background:#515c64"></div>
<div class="sm" style="left:1683px;width:10px;background:#515c64"></div>
<div class="sm" style="left:1871px;width:10px;background:#515c64"></div>
</div>

<!-- Track 14 -->
<div class="row" style="top:1228px">
<svg class="a" style="left:0;top:30px" width="2251" height="80"><defs><pattern id="w14" width="46.9" height="80" patternUnits="userSpaceOnUse"><path d="M0 38 L1 8 L4 14 L7 18 L10 24 L13 27 L17 18 L20 14 L23 22 L27 26 L31 28 L35 30 L39 31 L43 33 L46.9 37 L46.9 43 L43 47 L39 49 L35 50 L31 52 L27 54 L23 58 L20 66 L17 62 L13 53 L10 56 L7 62 L4 66 L1 72 L0 42 Z" fill="#c5c3de"/></pattern></defs><rect width="2251" height="80" fill="url(#w14)"/></svg>
<div class="c" style="left:0;width:188px;background:none"><div class="wh" style="background:#55566f"><span class="au"></span>CLF_80_..s_Forest</div></div>
<div class="c" style="left:188px;width:188px;background:none"><div class="wh" style="background:#55566f"><span class="au"></span>CLF_80_.._Forest</div></div>
<div class="c" style="left:375px;width:188px;background:none"><div class="wh" style="background:#55566f"><span class="au"></span>CLF_80_..s_Forest</div></div>
<div class="c" style="left:563px;width:188px;background:none"><div class="wh" style="background:#55566f"><span class="au"></span>CLF_80_.._Forest</div></div>
<div class="c" style="left:750px;width:188px;background:none"><div class="wh" style="background:#55566f"><span class="au"></span>CLF_80_..s_Forest</div></div>
<div class="c" style="left:938px;width:188px;background:none"><div class="wh" style="background:#55566f"><span class="au"></span>CLF_80_..s_Forest</div></div>
<div class="c" style="left:1126px;width:188px;background:none"><div class="wh" style="background:#55566f"><span class="au"></span>CLF_80_.._Forest</div></div>
<div class="c" style="left:1313px;width:188px;background:none"><div class="wh" style="background:#55566f"><span class="au"></span>CLF_80_.._Forest</div></div>
<div class="c" style="left:1501px;width:188px;background:none"><div class="wh" style="background:#55566f"><span class="au"></span>CLF_80_.._Forest</div></div>
<div class="c" style="left:1688px;width:188px;background:none"><div class="wh" style="background:#55566f"><span class="au"></span>CLF_80_..s_Forest</div></div>
<div class="c" style="left:1876px;width:188px;background:none"><div class="wh" style="background:#55566f"><span class="au"></span>CLF_80_..s_Forest</div></div>
<div class="c" style="left:2064px;width:187px;background:none"><div class="wh" style="background:#55566f"><span class="au"></span>CLF_80_.._Forest</div></div>
</div>

<!-- Track 15 -->
<div class="row" style="top:1340px">
<svg class="a" style="left:0;top:34px" width="2251" height="76"><defs><pattern id="w15" width="60" height="76" patternUnits="userSpaceOnUse"><path d="M0 22 L4 18 L7 24 L10 14 L13 22 L17 19 L20 25 L24 16 L27 23 L31 20 L34 26 L38 17 L41 24 L45 21 L48 27 L52 18 L56 23 L60 22 L60 54 L56 57 L52 52 L48 60 L45 55 L41 62 L38 53 L34 58 L31 55 L27 61 L24 52 L20 58 L17 54 L13 62 L10 55 L7 60 L4 52 L0 56 Z" fill="#bcd4bb"/></pattern></defs><rect width="2251" height="76" fill="url(#w15)"/></svg>
<div class="c" style="left:0;width:233px;background:none"><div class="wh" style="background:#4e6450"><span class="au"></span>VALENTINE_..ng_ravine</div></div>
<div class="c" style="left:233px;width:259px;background:none"><div class="wh" style="background:#4e6450"><span class="au"></span>VALENTINE_..ng_ravine</div></div>
<div class="c" style="left:492px;width:47px;background:none"><div class="wh" style="background:#4e6450"><span class="au"></span>V..e</div></div>
<div class="c" style="left:539px;width:211px;background:none"><div class="wh" style="background:#4e6450"><span class="au"></span>VALENTIN.._ravine</div></div>
<div class="c" style="left:750px;width:211px;background:none"><div class="wh" style="background:#4e6450"><span class="au"></span>VALENTINE_..ng_ravine</div></div>
<div class="c" style="left:961px;width:235px;background:none"><div class="wh" style="background:#4e6450"><span class="au"></span>VALENTINE_..ng_ravine</div></div>
<div class="c" style="left:1196px;width:70px;background:none"><div class="wh" style="background:#4e6450"><span class="au"></span>V..e</div></div>
<div class="c" style="left:1266px;width:211px;background:none"><div class="wh" style="background:#4e6450"><span class="au"></span>VALENTIN.._ravine</div></div>
<div class="c" style="left:1477px;width:223px;background:none"><div class="wh" style="background:#4e6450"><span class="au"></span>VALENTINE_..ng_ravine</div></div>
<div class="c" style="left:1700px;width:223px;background:none"><div class="wh" style="background:#4e6450"><span class="au"></span>VALENTINE_..ng_ravine</div></div>
<div class="c" style="left:1923px;width:82px;background:none"><div class="wh" style="background:#4e6450"><span class="au"></span>V..e</div></div>
<div class="c" style="left:2005px;width:199px;background:none"><div class="wh" style="background:#4e6450"><span class="au"></span>VALENTIN.._ravine</div></div>
<div class="c" style="left:2204px;width:47px;background:none"><div class="wh" style="background:#4e6450"><span class="au"></span>V..e</div></div>
</div>

</body></html>
